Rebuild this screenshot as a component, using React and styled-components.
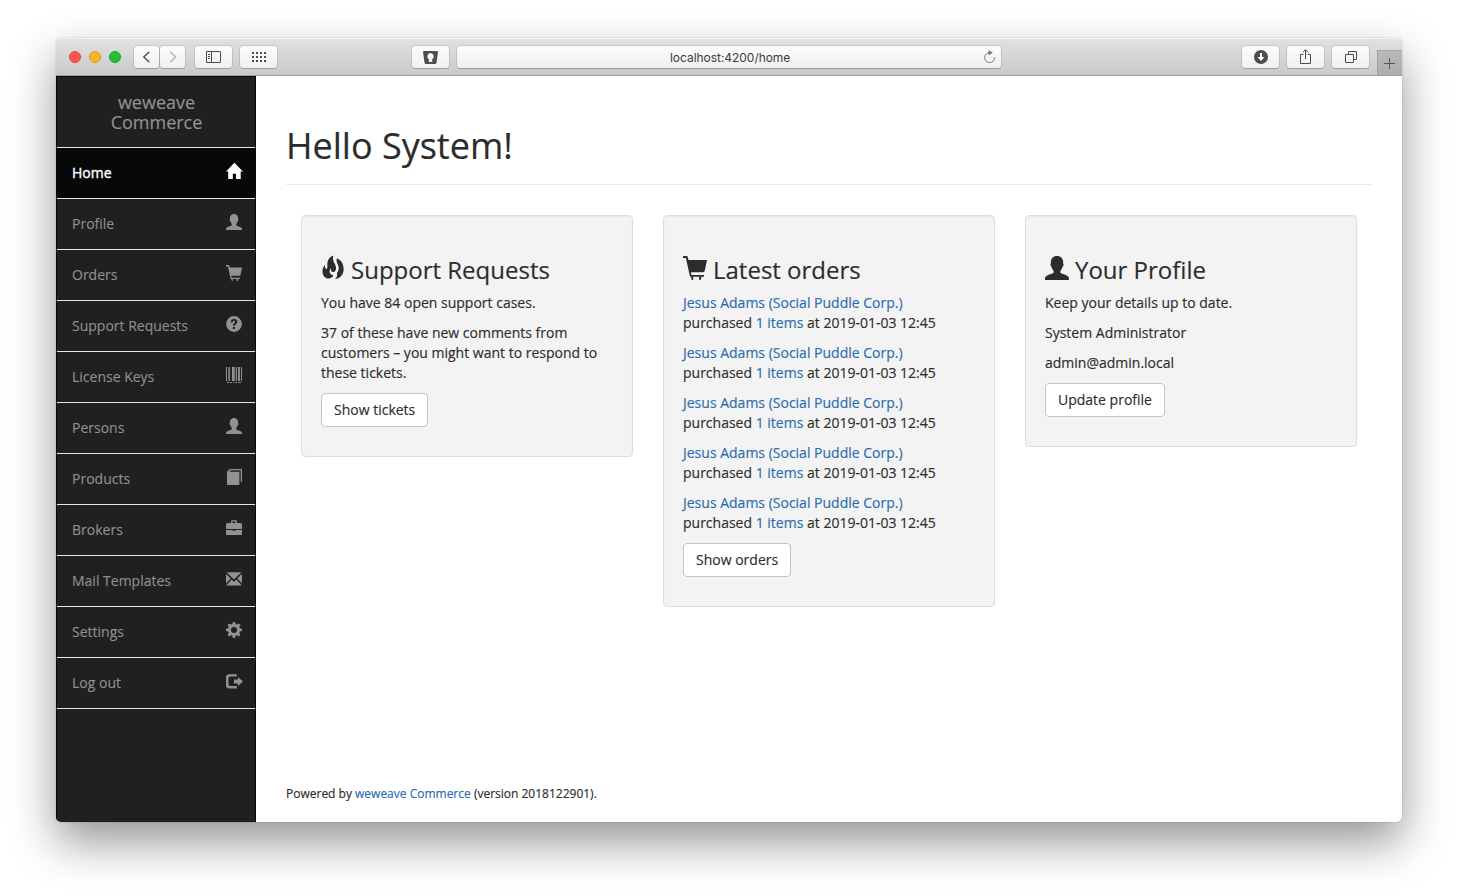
import React from "react";
import styled, { createGlobalStyle } from "styled-components";

const Global = createGlobalStyle`
  *, *::before, *::after { box-sizing: border-box; }
  body { margin: 0; background: #fff; overflow: hidden; }
`;

const Desktop = styled.div`
  width: 1458px;
  height: 896px;
  padding: 38px 56px;
  background: #fff;
  font-family: "Open Sans", "Noto Sans", sans-serif;
  font-size: 14px;
  line-height: 20px;
  color: #2c2c2c;
  -webkit-text-stroke: 0.15px currentColor;
`;

const Window = styled.div`
  width: 1346px;
  height: 784px;
  display: flex;
  flex-direction: column;
  border-radius: 5px;
  overflow: hidden;
  background: #fff;
  box-shadow: 0 0 1px rgba(0, 0, 0, 0.55), 0 20px 46px rgba(0, 0, 0, 0.42);
`;

const Toolbar = styled.header`
  flex: none;
  height: 38px;
  display: flex;
  align-items: flex-start;
  padding: 8px 0 0 13px;
  background: linear-gradient(#e2e2e2, #c9c9c9);
  border-bottom: 1px solid #9c9c9c;
  box-shadow: inset 0 1px 0 #f2f2f2;
`;

const Lights = styled.div`
  display: flex;
  gap: 8px;
  margin: 5px 13px 0 0;
`;

const Light = styled.span`
  width: 12px;
  height: 12px;
  border-radius: 50%;
  background: ${(p) => p.$fill};
  border: 1px solid ${(p) => p.$edge};
`;

const ButtonGroup = styled.div`
  display: flex;
  gap: ${(p) => p.$gap}px;
  margin-right: ${(p) => p.$after}px;
`;

const ToolButton = styled.button`
  width: ${(p) => p.$width || 37}px;
  height: 22px;
  padding: 0;
  border: 0;
  display: flex;
  align-items: center;
  justify-content: center;
  color: ${(p) => (p.$dim ? "#b0b0b0" : "#4d4d4d")};
  background: linear-gradient(#fcfcfc, #f1f1f1);
  border-radius: 3.5px;
  box-shadow: 0 0 0 1px rgba(0, 0, 0, 0.1), 0 1px 0 rgba(0, 0, 0, 0.14);

  svg { display: block; }
`;

const AddressBar = styled.div`
  width: 544px;
  height: 22px;
  display: flex;
  align-items: center;
  padding: 0 5px 0 213px;
  justify-content: space-between;
  background: linear-gradient(#fcfcfc, #f0f0f0);
  border-radius: 3.5px;
  box-shadow: 0 0 0 1px rgba(0, 0, 0, 0.1), 0 1px 0 rgba(0, 0, 0, 0.14);
  font: 12px/22px Inter, sans-serif;
  letter-spacing: -0.04px;
  color: #3c3c3c;
  margin-right: 241px;
  white-space: nowrap;
  -webkit-text-stroke: 0;
`;

const Address = styled.span`
  padding-top: 2px;
`;

const NewTab = styled.div`
  width: 25px;
  height: 25px;
  margin-top: 4px;
  display: flex;
  align-items: center;
  justify-content: center;
  padding-right: 2px;
  background: linear-gradient(#b9b9b9, #adadad);
  border-left: 1px solid #a2a2a2;
  border-top: 1px solid #a8a8a8;
  color: #565656;
`;

const Page = styled.div`
  flex: 1;
  display: flex;
  min-height: 0;
`;

const Sidebar = styled.nav`
  flex: none;
  width: 200px;
  background: #202020;
  border: solid #080808;
  border-width: 1px 1px 0;
`;

const Brand = styled.div`
  height: 71px;
  padding: 15px 49px 15px 50px;
  border-bottom: 1px solid #e7e7e7;
  font-size: 18px;
  line-height: 20px;
  text-align: center;
  color: #929292;
`;

const NavItem = styled.a`
  display: flex;
  justify-content: space-between;
  height: 51px;
  padding: 15px 13px 0 15px;
  border-bottom: 1px solid #e7e7e7;
  color: ${(p) => (p.$active ? "#fff" : "#929292")};
  background: ${(p) => (p.$active ? "#080808" : "transparent")};
  -webkit-text-stroke: ${(p) => (p.$active ? 0.35 : 0.1)}px currentColor;
`;

const Glyph = styled.svg`
  display: block;
  flex: none;
  width: ${(p) => p.$size}px;
  height: ${(p) => p.$size}px;
  overflow: visible;
  fill: currentColor;
`;

const Main = styled.main`
  flex: 1;
  display: flex;
  flex-direction: column;
  padding: 50px 30px 18px;
`;

const Title = styled.h1`
  margin: 0;
  height: 59px;
  line-height: 40px;
  font-size: 36px;
  font-weight: 400;
  border-bottom: 1px solid #ebebeb;
`;

const Cards = styled.div`
  display: flex;
  align-items: flex-start;
  gap: 30px;
  padding: 30px 15px 0;
`;

const Card = styled.section`
  width: 332px;
  padding: 19px 19px 29px;
  background: #f3f3f3;
  border: 1px solid #dedede;
  border-radius: 4px;
  box-shadow: inset 0 1px 1px rgba(0, 0, 0, 0.05);
`;

const CardTitle = styled.h3`
  display: flex;
  gap: 6px;
  margin: 20px 0 10px;
  height: 28px;
  font-size: 24px;
  font-weight: 400;
  line-height: 30px;
  white-space: nowrap;

  svg { margin-top: 1px; }
`;

const Text = styled.p`
  margin: 0 0 10px;
`;

const Link = styled.a`
  color: #2a6bb0;
`;

const ActionButton = styled.button`
  display: block;
  height: 34px;
  padding: 0 12px;
  border: 1px solid #c4c4c4;
  border-radius: 4px;
  background: #fff;
  color: #2c2c2c;
  font: inherit;
  white-space: nowrap;
`;

const Footer = styled.footer`
  margin-top: auto;
  font-size: 12px;
`;

const shapes = {
  home: <path d="M8.4-.3 17 8.4h-2.300V16H10v-5.200H6.800V16H2.200V8.400H0z" />,
  user: <path d="M8 0c2.600 0 4.100 1.700 4.100 4.200 0 .6 0 1 .2 1.300.2.600-.1 1.400-.6 1.700-.3 1.200-.8 2-1.400 2.600v1.600c2 1 5.700 1.600 5.700 3.400V16H0v-1.200c0-1.800 3.700-2.400 5.700-3.400V9.800C5.100 9.200 4.600 8.400 4.300 7.200c-.5-.3-.8-1.100-.6-1.700C3.900 5.200 3.900 4.800 3.900 4.200 3.900 1.700 5.400 0 8 0z" />,
  cart: (
    <g>
      <path d="M0 0h2.500q.5 0 .6.500L3.700 2.600H16l-1.500 7.300q-.2.900-1.200.9H5.200l.5 1.900H14v1.200H4.700L1.900 1.400H0z" />
      <path d="M5.200 13.900h1.600V16H5.900zM10.600 13.900h1.800l-.6 2.100h-.9z" />
    </g>
  ),
  question: (
    <path fillRule="evenodd" d="M8 .1a7.900 7.900 0 1 1 0 15.800A7.900 7.900 0 0 1 8 .1zM8.100 3C5.900 3 4.700 4.200 4.600 6.300h2.200c0-1 .4-1.500 1.200-1.500.7 0 1.100.4 1.100 1 0 1.400-2.200 1.500-2.200 3.700v.3H9v-.3c.2-1.200 2.400-1.600 2.400-3.900C11.400 4 10.100 3 8.100 3zM6.800 10.900v2.200H9v-2.200z" />
  ),
  barcode: (
    <path d="M0 0h1v14H0zM2 0h.7v14H2zM3.200 0h.9v14h-.9zM6 0h2.700v14H6zM9.700 0h1.200v14H9.700zM12 0h1.900v14H12zM15 0h1v14h-1zM1 15h2v1H1zM4 15h2v1H4zM7 15h1v1H7zM9 15h2v1H9zM12 15h3v1h-3z" />
  ),
  book: <path d="M1 3.500Q1 2.800 1.600 2.200L3.200.6Q3.800 0 4.600 0H16v12.200L14.700 13.700V1.300H4.800L3.400 2.700H13.400V16H1z" />,
  briefcase: (
    <g>
      <path fillRule="evenodd" d="M5 3V1.500Q5 .2 6.200.2h3.600Q11 .2 11 1.500V3h3.500Q16 3 16 4.500V9H0V4.500Q0 3 1.500 3zM6.400 3h3.200V1.500H6.400z" />
      <path d="M0 10h6.500v.7h3V10H16v4q0 1-1 1H1q-1 0-1-1z" />
    </g>
  ),
  envelope: <path d="M.6 1.300h14.800L8 8.400zM0 2.800 4.700 7.600 0 12.400zM16 2.800v9.600L11.300 7.600zM5.600 8.500 8 10.800l2.400-2.300 5.400 6H.2z" />,
  gear: (
    <path fillRule="evenodd" d="M6.900 0h2.200l.5 2.100 1.300.5 1.900-1.200 1.700 1.700-1.200 1.900.5 1.300 2.200.5v2.300l-2.200.5-.5 1.300 1.200 1.900-1.700 1.700-1.900-1.200-1.300.5L9.100 16H6.900l-.5-2.200-1.300-.5-1.900 1.200-1.700-1.700 1.200-1.900-.5-1.300L0 9.100V6.800l2.200-.5L2.700 5 1.500 3.100l1.700-1.700 1.900 1.200 1.300-.5zM8 4.900a3 3 0 1 0 0 6 3 3 0 0 0 0-6z" />
  ),
  logout: (
    <g>
      <path d="M10.800 1.200v2.200H4.200q-1.700 0-1.700 1.600v6.400q0 1.700 1.700 1.700h6.600v2.300H3.700Q0 15.400 0 12.200V4.500Q0 1.200 3.700 1.200z" />
      <path d="M8 6.500h3.900V4.100L17 8.500l-5.100 4.400v-2.400H8z" />
    </g>
  ),
  fire: (
    <g>
      <path d="M8.400-.3C7.400 2 8.400 3.600 9.400 5.600c1 2 .9 4.400-.8 5-1.600.4-2.300-1-2-2.600-1 1-1.300 2.600-.2 4 .6.6 1.200.9 1.800.9-.4 1.400-1.700 2.100-3.200 2.100C2.600 15 1 12.900 1 10.300 1 8.400 1.600 7 2.600 6c0 1.600.4 2.600 1 2.900C4.800 8 4 6.200 4.300 4.200 4.700 2 6.200.4 8.400-.3z" />
      <path d="M10.600 1.500c2.800 1.100 4.500 3.800 4.500 7.300 0 3.800-2.500 6.200-5.900 6.600 1.400-1 1.800-2.400 1.400-4.100 1.300-1.300 1.600-3.300.8-5.300-.8-1.600-1.400-2.800-.8-4.500z" />
    </g>
  ),
};

const Icon = ({ name, size = 16 }) => (
  <Glyph viewBox="0 0 16 16" $size={size}>{shapes[name]}</Glyph>
);

const LineIcon = styled.svg.attrs({ fill: "none", stroke: "currentColor" })`
  display: block;
  flex: none;
`;

const nav = [
  ["Home", "home"],
  ["Profile", "user"],
  ["Orders", "cart"],
  ["Support Requests", "question"],
  ["License Keys", "barcode"],
  ["Persons", "user"],
  ["Products", "book"],
  ["Brokers", "briefcase"],
  ["Mail Templates", "envelope"],
  ["Settings", "gear"],
  ["Log out", "logout"],
];

const orders = Array.from({ length: 5 }, () => ({
  customer: "Jesus Adams (Social Puddle Corp.)",
  items: "1 items",
  date: "2019-01-03 12:45",
}));

const BrowserToolbar = () => (
  <Toolbar>
    <Lights>
      <Light $fill="#fc5650" $edge="#e2443e" />
      <Light $fill="#fdb324" $edge="#dd9a1c" />
      <Light $fill="#23c034" $edge="#17a526" />
    </Lights>
    <ButtonGroup $gap={1} $after={10}>
      <ToolButton $width={25}>
        <LineIcon width="8" height="12" strokeWidth="1.4"><path d="M6.300.8.800 6l5.500 5.200" /></LineIcon>
      </ToolButton>
      <ToolButton $width={25} $dim>
        <LineIcon width="8" height="12" strokeWidth="1.4"><path d="M1.200.8 6.700 6l-5.500 5.200" /></LineIcon>
      </ToolButton>
    </ButtonGroup>
    <ButtonGroup $gap={8} $after={135}>
      <ToolButton>
        <LineIcon width="15" height="12"><path d="M.5.5h14v11H.5zM5.500.5v11M2 3.500h2M2 5.500h2M2 7.500h2" /></LineIcon>
      </ToolButton>
      <ToolButton>
        <LineIcon width="15" height="10" strokeWidth="2" strokeDasharray="2 2">
          <path d="M1 1h14M1 5h14M1 9h14" />
        </LineIcon>
      </ToolButton>
    </ButtonGroup>
    <ButtonGroup $gap={8} $after={8}>
      <ToolButton>
        <svg width="15" height="13" fill="currentColor">
          <path fillRule="evenodd" d="M1 0h13q1 0 1 1l-1.500 10.500Q13.300 13 12 13H3q-1.300 0-1.500-1.500L0 1q0-1 1-1zm6.500 1.900a3.400 3.400 0 0 0-1.700 6.200V11h3.400V8.100A3.400 3.400 0 0 0 7.500 1.900z" />
        </svg>
      </ToolButton>
    </ButtonGroup>
    <AddressBar>
      <Address>localhost:4200/home</Address>
      <LineIcon width="13" height="14" stroke="#777">
        <path d="M7 2.600A5 5 0 1 0 11.600 7.300" stroke="#777" />
        <path d="M5.500 0l4.300 2.800-4.300 2.700z" fill="#777" stroke="none" />
      </LineIcon>
    </AddressBar>
    <ButtonGroup $gap={8} $after={8}>
      <ToolButton>
        <LineIcon width="14" height="14">
          <circle cx="7" cy="7" r="7" fill="currentColor" stroke="none" />
          <path d="M7 3v5" stroke="#fff" strokeWidth="2" />
          <path d="M3.500 7h7L7 11z" fill="#fff" stroke="none" />
        </LineIcon>
      </ToolButton>
      <ToolButton>
        <LineIcon width="11" height="16"><path d="M3.500 5.500h-3v9h10v-9h-3M5.500 10V.8M2.700 3.500 5.500.7l2.800 2.800" /></LineIcon>
      </ToolButton>
      <ToolButton>
        <LineIcon width="12" height="12"><path d="M.5 3.500h8v8h-8zM3.500 3.500v-3h8v8h-3" /></LineIcon>
      </ToolButton>
    </ButtonGroup>
    <NewTab>
      <LineIcon width="11" height="11"><path d="M5.500 0v11M0 5.500h11" /></LineIcon>
    </NewTab>
  </Toolbar>
);

export default function App() {
  return (
    <Desktop>
      <Global />
      <Window>
        <BrowserToolbar />
        <Page>
          <Sidebar>
            <Brand>weweave Commerce</Brand>
            {nav.map(([label, icon]) => (
              <NavItem key={label} $active={label === "Home"}>
                <span>{label}</span>
                <Icon name={icon} />
              </NavItem>
            ))}
          </Sidebar>
          <Main>
            <Title>Hello System!</Title>
            <Cards>
              <Card>
                <CardTitle><Icon name="fire" size={24} />Support Requests</CardTitle>
                <Text>You have 84 open support cases.</Text>
                <Text>
                  37 of these have new comments from customers – you might want to respond to these tickets.
                </Text>
                <ActionButton>Show tickets</ActionButton>
              </Card>
              <Card>
                <CardTitle><Icon name="cart" size={24} />Latest orders</CardTitle>
                {orders.map((order, i) => (
                  <Text key={i}>
                    <Link>{order.customer}</Link>
                    <br />
                    purchased <Link>{order.items}</Link> at {order.date}
                  </Text>
                ))}
                <ActionButton>Show orders</ActionButton>
              </Card>
              <Card>
                <CardTitle><Icon name="user" size={24} />Your Profile</CardTitle>
                <Text>Keep your details up to date.</Text>
                <Text>System Administrator</Text>
                <Text>admin@admin.local</Text>
                <ActionButton>Update profile</ActionButton>
              </Card>
            </Cards>
            <Footer>
              Powered by <Link>weweave Commerce</Link> (version 2018122901).
            </Footer>
          </Main>
        </Page>
      </Window>
    </Desktop>
  );
}
